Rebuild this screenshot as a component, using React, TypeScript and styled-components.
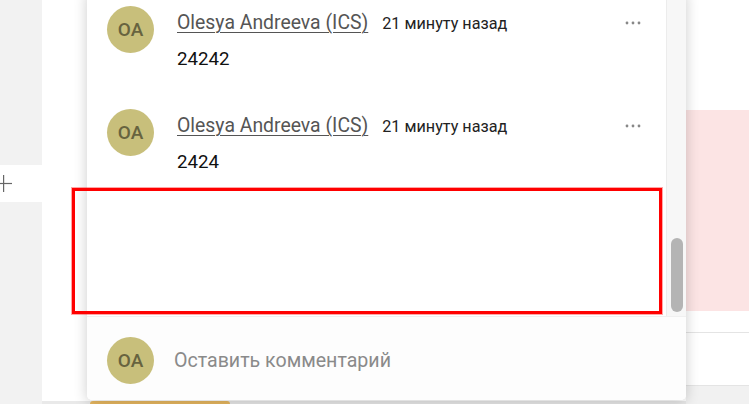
import React from "react";
import styled, { createGlobalStyle } from "styled-components";

const Global = createGlobalStyle`
  html, body { margin: 0; padding: 0; background: #fff; }
  body { font-family: Roboto, "Liberation Sans", Arial, sans-serif; }
  * { box-sizing: border-box; }
`;

const Page = styled.div`
  position: relative;
  width: 749px;
  height: 404px;
  overflow: hidden;
  display: flex;
  background: #fff;
`;

const Rail = styled.div`
  width: 42px;
  flex: none;
  display: flex;
  flex-direction: column;
`;

const RailBlock = styled.div<{ $h?: number }>`
  background: #f2f2f2;
  height: ${(p) => (p.$h ? `${p.$h}px` : "auto")};
  flex: ${(p) => (p.$h ? "none" : 1)};
`;

const RailRow = styled.div`
  height: 37px;
  background: #fff;
  display: flex;
  align-items: center;
  overflow: hidden;
`;

const Main = styled.div`
  flex: 1;
  display: flex;
  flex-direction: column;
  justify-content: flex-end;
  background: #fff;
`;

const BottomBar = styled.div`
  height: 3px;
  display: flex;
  padding-left: 48px;
  background: #e9e9e9;
`;

const OrangeButton = styled.div`
  width: 140px;
  height: 3px;
  background: #e8b860;
  border-radius: 3px 3px 0 0;
`;

const RightCol = styled.div`
  width: 63px;
  flex: none;
  display: flex;
  flex-direction: column;
`;

const Band = styled.div<{ $h?: number; $bg: string; $line?: boolean }>`
  height: ${(p) => (p.$h ? `${p.$h}px` : "auto")};
  flex: ${(p) => (p.$h ? "none" : 1)};
  background: ${(p) => p.$bg};
  border-bottom: ${(p) => (p.$line ? "1px solid #e4e4e4" : "none")};
`;

const Panel = styled.div`
  position: absolute;
  left: 87px;
  top: -10px;
  width: 599px;
  height: 410px;
  background: #fff;
  border-radius: 5px;
  box-shadow: 0 2px 14px rgba(0, 0, 0, 0.2);
  display: flex;
  flex-direction: column;
  overflow: hidden;
`;

const Scroller = styled.div`
  height: 326px;
  flex: none;
  display: flex;
`;

const List = styled.div`
  flex: 1;
  display: flex;
  flex-direction: column;
  gap: 38px;
  padding: 16px 0 0 20px;
`;

const Track = styled.div`
  width: 20px;
  flex: none;
  background: #f7f7f7;
  border-left: 1px solid #ececec;
  display: flex;
  flex-direction: column;
  justify-content: flex-end;
  padding: 0 0 4px 4px;
`;

const Thumb = styled.div`
  width: 12px;
  height: 74px;
  border-radius: 6px;
  background: #b4b4b4;
`;

const Comment = styled.div`
  display: flex;
  gap: 23px;
  align-items: flex-start;
`;

const Avatar = styled.div`
  width: 47px;
  height: 47px;
  flex: none;
  border-radius: 50%;
  background: #c8bf7b;
  color: #67633f;
  font-weight: 500;
  font-size: 19px;
  display: flex;
  align-items: center;
  justify-content: center;
`;

const Body = styled.div`
  flex: 1;
  display: flex;
  flex-direction: column;
  gap: 12px;
  padding: 5px 25px 0 0;
`;

const Header = styled.div`
  display: flex;
  align-items: baseline;
  height: 24px;
  line-height: 24px;
`;

const Name = styled.a`
  font-size: 19.4px;
  color: #555;
  text-decoration: underline;
  text-underline-offset: 3px;
  text-decoration-thickness: 1px;
  cursor: pointer;
`;

const Time = styled.span`
  font-size: 16.2px;
  color: #222;
  margin-left: 14px;
`;

const Dots = styled.span`
  margin-left: auto;
  align-self: center;
  display: flex;
`;

const Text = styled.div`
  font-size: 18.7px;
  line-height: 24px;
  color: #111;
`;

const Footer = styled.div`
  flex: 1;
  display: flex;
  align-items: center;
  gap: 20px;
  padding: 3px 20px 0;
  border-top: 1px solid #f0f0f0;
  background: #fdfdfd;
`;

const Placeholder = styled.span`
  font-size: 19.6px;
  color: #8a8a8a;
`;

const Highlight = styled.div`
  position: absolute;
  left: 72px;
  top: 188px;
  width: 590px;
  height: 126px;
  border: 3px solid #ff0000;
  box-shadow: 0 0 0 1px rgba(255, 0, 0, 0.35);
  pointer-events: none;
`;

const PlusIcon = () => (
  <svg width="14" height="20" viewBox="0 0 14 20" style={{ display: "block" }}>
    <line x1="-6" y1="9.5" x2="12" y2="9.5" stroke="#666" strokeWidth="1.2" />
    <line x1="3.6" y1="1" x2="3.6" y2="18" stroke="#666" strokeWidth="1.2" />
  </svg>
);

const MoreIcon = () => (
  <svg width="16" height="4" viewBox="0 0 16 4">
    <circle cx="2" cy="2" r="1.4" fill="#888" />
    <circle cx="8" cy="2" r="1.4" fill="#888" />
    <circle cx="14" cy="2" r="1.4" fill="#888" />
  </svg>
);

const comments = [
  { id: 1, author: "Olesya Andreeva (ICS)", time: "21 минуту назад", text: "24242" },
  { id: 2, author: "Olesya Andreeva (ICS)", time: "21 минуту назад", text: "2424" },
];

export default function App() {
  return (
    <>
      <Global />
      <Page>
        <Rail>
          <RailBlock $h={165} />
          <RailRow>
            <PlusIcon />
          </RailRow>
          <RailBlock />
        </Rail>
        <Main>
          <BottomBar>
            <OrangeButton />
          </BottomBar>
        </Main>
        <RightCol>
          <Band $h={110} $bg="#fff" />
          <Band $h={201} $bg="#fce4e4" />
          <Band $h={22} $bg="#fff" $line />
          <Band $h={53} $bg="#fff" $line />
          <Band $bg="#f1f1f1" />
        </RightCol>

        <Panel>
          <Scroller>
            <List>
              {comments.map((c) => (
                <Comment key={c.id}>
                  <Avatar>OA</Avatar>
                  <Body>
                    <Header>
                      <Name>{c.author}</Name>
                      <Time>{c.time}</Time>
                      <Dots>
                        <MoreIcon />
                      </Dots>
                    </Header>
                    <Text>{c.text}</Text>
                  </Body>
                </Comment>
              ))}
            </List>
            <Track>
              <Thumb />
            </Track>
          </Scroller>
          <Footer>
            <Avatar>OA</Avatar>
            <Placeholder>Оставить комментарий</Placeholder>
          </Footer>
        </Panel>
        <Highlight />
      </Page>
    </>
  );
}
